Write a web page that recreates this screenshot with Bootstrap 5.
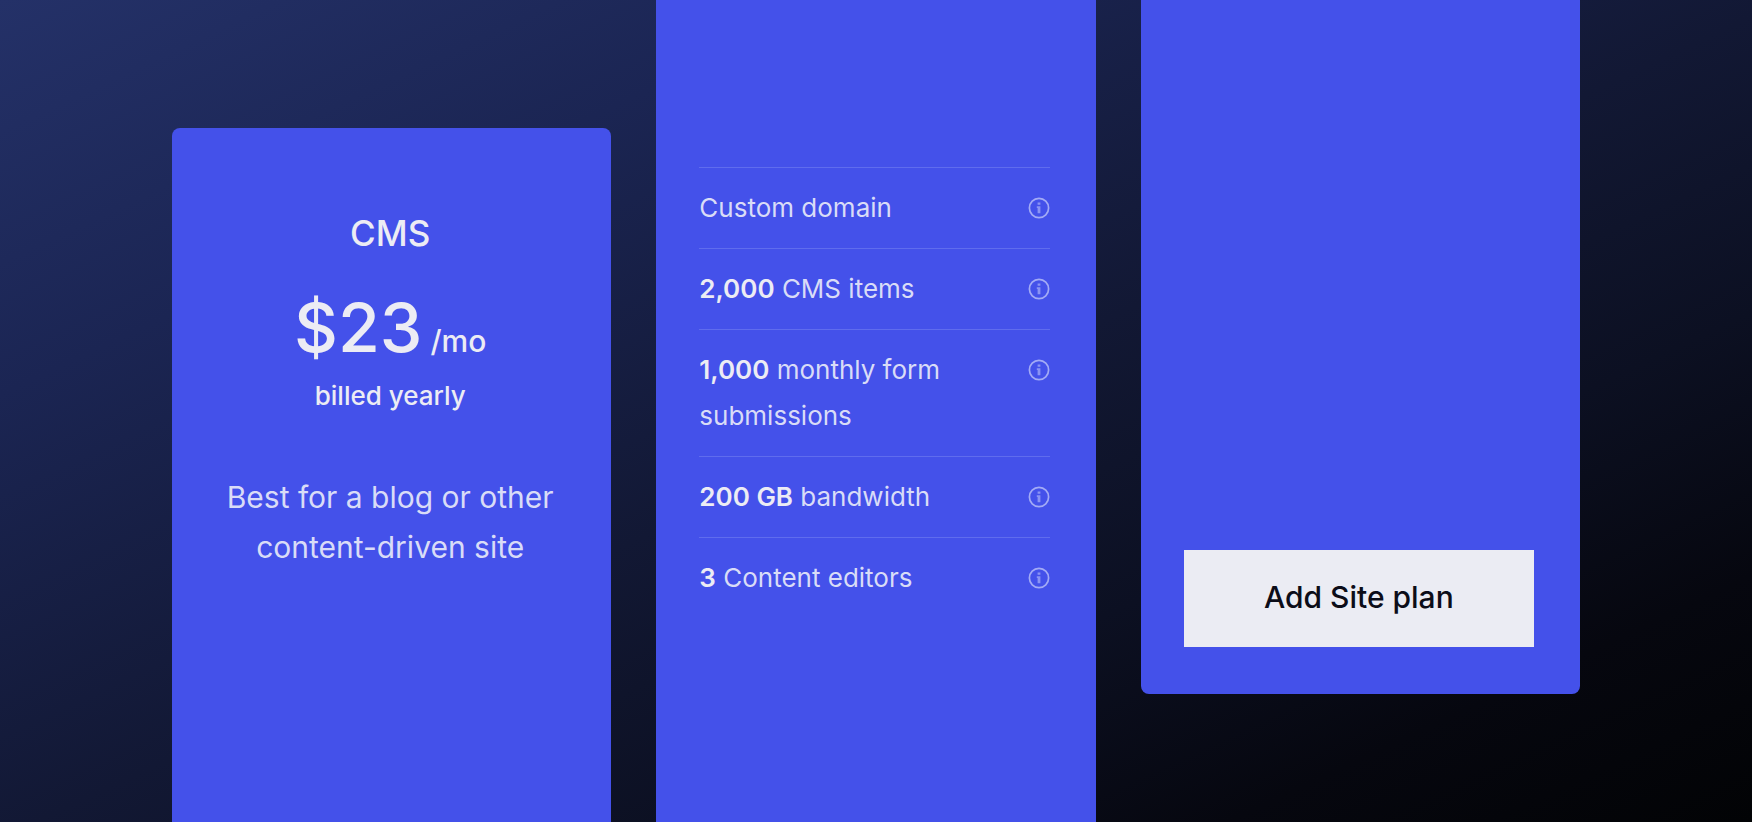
<!DOCTYPE html>
<html lang="en">
<head>
<meta charset="utf-8">
<meta name="viewport" content="width=device-width, initial-scale=1">
<title>CMS site plan</title>
<link href="https://cdn.jsdelivr.net/npm/bootstrap@5.3.0/dist/css/bootstrap.min.css" rel="stylesheet">
<style>
  body {
    font-family: Inter, "Liberation Sans", sans-serif;
    color: #ececf4;
    background: linear-gradient(to bottom right, #243168 0%, #1b2553 24%, #121834 51%, #0c1022 69%, #06070f 85%, #020305 100%) #020305;
  }
  .plans { display: grid; grid-template-columns: repeat(3, 1fr); gap: 45px; padding: 0 172px; }
  .plan-panel { background: #4451ea; padding: 0 46px 0 43px; }
  .panel-start { margin-top: 128px; padding-top: 77px; border-radius: 8px 8px 0 0; }
  .panel-list { padding-top: 167px; }
  .panel-end { margin-bottom: 128px; padding-bottom: 47px; border-radius: 0 0 8px 8px; }
  .plan-name { font-size: 35px; line-height: 56px; font-weight: 500; }
  .plan-price { font-size: 68px; line-height: 84px; font-weight: 500; margin-top: 24px; }
  .plan-unit { font-size: 30px; line-height: 1; }
  .plan-billing { font-size: 26px; line-height: 40px; font-weight: 500; margin-top: 7px; }
  .plan-pitch { font-size: 30px; line-height: 50px; font-weight: 400; margin-top: 56px; color: #d9dcf7; }
  .feature { font-size: 26px; line-height: 46px; font-weight: 400; padding: 17px 0; border-top: 1px solid #5f6cee; color: #d9dcf7; }
  .feature strong { font-weight: 600; color: #ececf4; }
  .info-btn { height: 46px; color: #a3abf5; }
  .plan-btn { height: 97px; font-size: 30px; font-weight: 500; background: #ebecf3; color: #0c0d18; padding: 0 12px 2px; }
  @media (max-width: 1200px) {
    .plans { grid-template-columns: 1fr; padding: 0 24px; }
  }
</style>
</head>
<body>
<svg class="d-none" aria-hidden="true">
  <symbol id="info" viewBox="0 0 22 22">
    <circle cx="11" cy="11" r="9.6" fill="none" stroke="currentColor" stroke-width="1.7"/>
    <path d="M9.6 5.4h2.8v2.4H9.6zM8.8 9.2h3.6v7H9.6v-5.2h-.8z" fill="currentColor" opacity=".75"/>
  </symbol>
</svg>
<main class="plans min-vh-100">
  <section class="plan-panel panel-start text-center">
    <h1 class="plan-name mb-0">CMS</h1>
    <p class="plan-price mb-0">$23<span class="plan-unit"> /mo</span></p>
    <p class="plan-billing mb-0">billed yearly</p>
    <p class="plan-pitch mb-0">Best for a blog or other content-driven site</p>
  </section>
  <section class="plan-panel panel-list">
    <ul class="list-unstyled mb-0">
      <li class="feature d-flex justify-content-between align-items-start gap-5"><span>Custom domain</span><button type="button" class="info-btn btn p-0 border-0 d-flex align-items-center" aria-label="About custom domain"><svg width="22" height="22"><use href="#info"/></svg></button></li>
      <li class="feature d-flex justify-content-between align-items-start gap-5"><span><strong>2,000</strong> CMS items</span><button type="button" class="info-btn btn p-0 border-0 d-flex align-items-center" aria-label="About CMS items"><svg width="22" height="22"><use href="#info"/></svg></button></li>
      <li class="feature d-flex justify-content-between align-items-start gap-5"><span><strong>1,000</strong> monthly form submissions</span><button type="button" class="info-btn btn p-0 border-0 d-flex align-items-center" aria-label="About form submissions"><svg width="22" height="22"><use href="#info"/></svg></button></li>
      <li class="feature d-flex justify-content-between align-items-start gap-5"><span><strong>200 GB</strong> bandwidth</span><button type="button" class="info-btn btn p-0 border-0 d-flex align-items-center" aria-label="About bandwidth"><svg width="22" height="22"><use href="#info"/></svg></button></li>
      <li class="feature d-flex justify-content-between align-items-start gap-5"><span><strong>3</strong> Content editors</span><button type="button" class="info-btn btn p-0 border-0 d-flex align-items-center" aria-label="About content editors"><svg width="22" height="22"><use href="#info"/></svg></button></li>
    </ul>
  </section>
  <section class="plan-panel panel-end d-flex flex-column">
    <button type="button" class="plan-btn btn rounded-0 border-0 w-100 mt-auto">Add Site plan</button>
  </section>
</main>
<script src="https://cdn.jsdelivr.net/npm/bootstrap@5.3.0/dist/js/bootstrap.bundle.min.js"></script>
</body>
</html>
